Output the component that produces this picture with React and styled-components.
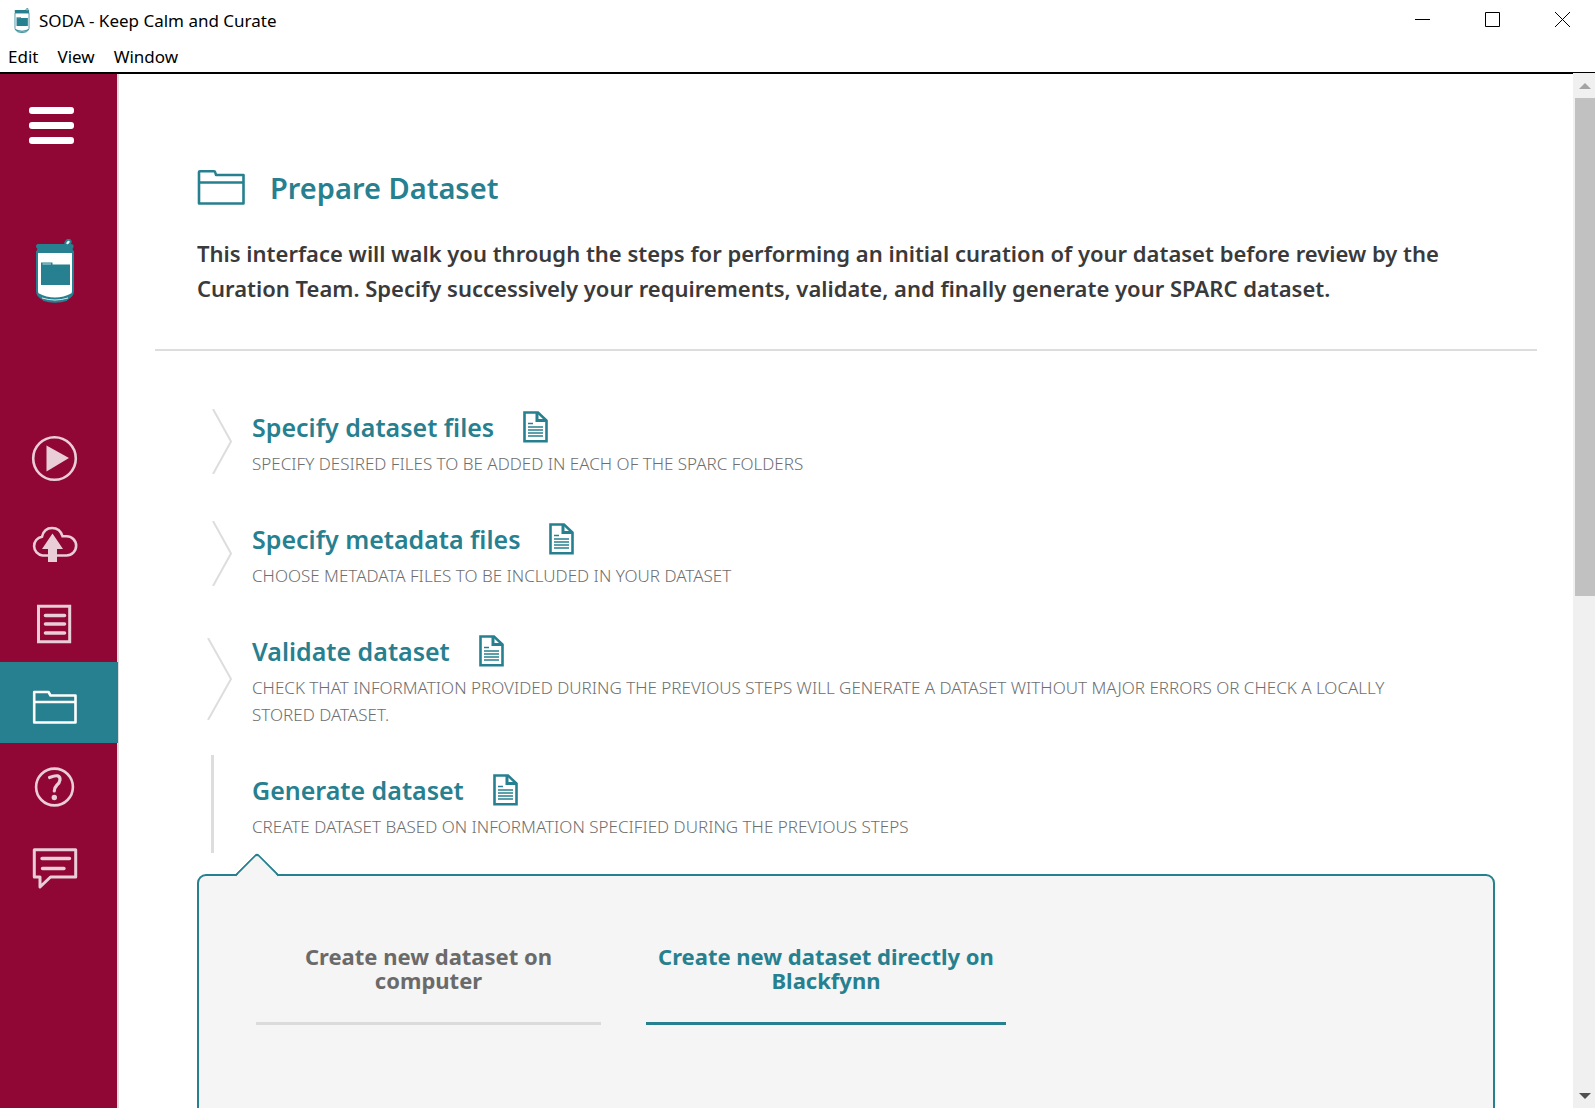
import React from 'react';
import styled, { createGlobalStyle, css } from 'styled-components';

const teal = '#27808f';
const maroon = '#900735';
const grey = '#dddddd';
const panelGrey = '#f5f5f5';

const GlobalStyle = createGlobalStyle`
  *, *::before, *::after { box-sizing: border-box; }
  body { margin: 0; background: #fff; font-family: "Noto Sans", "Open Sans", sans-serif; }
  h1, h2, p { margin: 0; }
  button { margin: 0; padding: 0; border: 0; background: none; font: inherit; color: inherit; cursor: pointer; }
  svg { display: block; }
`;

const Window = styled.div`
  display: flex;
  flex-direction: column;
  height: 100vh;
  overflow: hidden;
`;

const TitleBar = styled.header`
  display: flex;
  align-items: center;
  height: 41px;
  padding: 0 10px 0 14px;
  font-size: 17px;
  line-height: 24px;
  color: #000;
`;

const WindowTitle = styled.span`
  flex: 1;
  margin-left: 9px;
`;

const WindowControls = styled.div`
  display: flex;
  align-self: flex-start;
  gap: 24px;
`;

const WindowButton = styled.button`
  display: grid;
  place-items: center;
  width: 46px;
  height: 39px;
`;

const MenuBar = styled.nav`
  display: flex;
  gap: 19px;
  height: 33px;
  padding: 4px 8px 0;
  border-bottom: 2px solid #000;
  font-size: 17px;
  line-height: 24px;
`;

const MenuItem = styled.button`
  height: 24px;
`;

const Body = styled.div`
  display: flex;
  flex: 1;
  min-height: 0;
`;

const Sidebar = styled.aside`
  flex: none;
  width: 119px;
  border-right: 2px solid ${grey};
  background: ${maroon};
`;

const MenuToggle = styled.button`
  display: flex;
  flex-direction: column;
  gap: 8px;
  margin: 33px 0 0 29px;
`;

const ToggleBar = styled.span`
  width: 45px;
  height: 7px;
  border-radius: 3px;
  background: #fff;
`;

const LogoBox = styled.div`
  margin: 95px 0 116px 35px;
`;

const SideNav = styled.nav`
  display: flex;
  flex-direction: column;
`;

const SideLink = styled.a`
  height: 81px;
  padding: 16px 0 0 31px;
  color: #e9cdd7;
  ${(p) => p.$active && css`
    margin-right: -1px;
    background: ${teal};
    color: #fff;
  `}
`;

const Main = styled.main`
  flex: 1;
  min-width: 0;
  padding: 0 36px;
  overflow: hidden;
`;

const Intro = styled.section`
  padding: 95px 42px 43px;
  border-bottom: 2px solid ${grey};
`;

const TitleRow = styled.div`
  display: flex;
  align-items: center;
  gap: 24px;
  height: 38px;
`;

const PageTitle = styled.h1`
  font-size: 29px;
  font-weight: 600;
  line-height: 38px;
  color: ${teal};
`;

const Lead = styled.p`
  margin-top: 29px;
  font-size: 22px;
  font-weight: 600;
  line-height: 35px;
  color: #3a3a3a;
`;

const Steps = styled.section`
  padding: 41px 42px 0;
`;

const Step = styled.article`
  display: grid;
  grid-template-columns: 35px 1fr;
  column-gap: 20px;
  margin-bottom: 14px;
`;

const Marker = styled.div`
  display: flex;
  align-items: center;
  justify-content: flex-end;
`;

const ActiveMarker = styled.div`
  margin-left: 14px;
  width: 3px;
  background: ${grey};
`;

const StepText = styled.div`
  padding: 17px 60px 13px 0;
`;

const StepHead = styled.button`
  display: flex;
  align-items: center;
  gap: 29px;
  color: ${teal};
`;

const StepTitle = styled.h2`
  font-size: 25px;
  font-weight: 600;
  line-height: 36px;
`;

const StepNote = styled.p`
  margin-top: 5px;
  font-size: 17px;
  font-weight: 300;
  line-height: 27px;
  color: #6e6e6e;
  text-transform: uppercase;
`;

const Panel = styled.section`
  position: relative;
  margin: 21px 42px 0;
  padding: 68px 57px 120px;
  border: 2px solid ${teal};
  border-radius: 9px;
  background: ${panelGrey};
  &::before {
    content: "";
    position: absolute;
    top: -17px;
    left: 42px;
    width: 32px;
    height: 32px;
    border: solid ${teal};
    border-width: 2px 0 0 2px;
    border-radius: 4px 0 0 0;
    background: linear-gradient(135deg, ${panelGrey} 50%, transparent 50%);
    transform: rotate(45deg);
  }
`;

const Tabs = styled.div`
  display: grid;
  grid-template-columns: minmax(0, 345px) minmax(0, 360px);
  gap: 45px;
`;

const Tab = styled.button`
  padding: 0 8px 30px;
  border-bottom: 3px solid ${(p) => (p.$selected ? teal : '#dbdbdb')};
  font-size: 22px;
  font-weight: 700;
  line-height: 24px;
  text-align: center;
  color: ${(p) => (p.$selected ? teal : '#6a6a6a')};
`;

const ScrollTrack = styled.div`
  display: flex;
  flex-direction: column;
  flex: none;
  width: 22px;
  margin-top: -1px;
  padding-left: 2px;
  background: #f0f0f0;
`;

const ScrollButton = styled.button`
  display: grid;
  place-items: center;
  height: 25px;
`;

const ScrollRail = styled.div`
  flex: 1;
`;

const ScrollThumb = styled.div`
  height: 50.6%;
  background: #c1c1c1;
`;

function Can({ width, height }) {
  return (
    <svg width={width} height={height} viewBox="0 0 40 64" aria-hidden="true">
      <path d="M2 13V52Q2 57 8 60Q20 64.500 32 60Q38 57 38 52V13Z" fill="#fff" stroke={teal} strokeWidth="2" />
      <path d="M3 54Q20 63 37 54L36 57Q20 66 4 57Z" fill={teal} />
      <path d="M7 59Q20 63 33 59" fill="none" stroke="#fff" strokeWidth="0.800" />
      <path d="M8 61Q20 65 32 61" fill="none" stroke={teal} strokeWidth="1.600" />
      <path d="M3 5H36Q39 5 38.500 8L37.500 10L39 13H1L2.500 10L1 8Q1 5 3 5Z" fill={teal} />
      <ellipse cx="33" cy="3.500" rx="3" ry="2.200" transform="rotate(-50 33 3.500)" fill="#fff" stroke={teal} strokeWidth="2" />
      <path d="M6 23.500H17.500V25.500H35V46H6Z" fill={teal} />
      <path d="M7.500 25H16" stroke="#fff" strokeWidth="0.700" />
    </svg>
  );
}

function SideIcon({ children }) {
  return (
    <svg width="48" height="56" viewBox="0 0 48 56" fill="none" stroke="currentColor" strokeWidth="2.600" aria-hidden="true">
      {children}
    </svg>
  );
}

const icons = {
  play: (
    <SideIcon>
      <circle cx="23.500" cy="23.500" r="21.300" />
      <path d="M15.500 10.500L38 23L15.500 36.500Z" fill="currentColor" stroke="none" />
    </SideIcon>
  ),
  upload: (
    <SideIcon>
      <path d="M17 39.500H11.500A9.500 9.500 0 0 1 11 20.700Q13 12 21 12Q29 12 31.500 20.200H35.500A9.600 9.600 0 0 1 35.500 39.500H26" />
      <path d="M21.500 17.500L32 33H26V46H17V33H11Z" fill="currentColor" stroke="none" />
    </SideIcon>
  ),
  document: (
    <SideIcon>
      <path d="M7.500 9.300H38.700V44.700H7.500Z" strokeWidth="3" />
      <path d="M14.500 18.500H33.500M14.500 27H33.500M14.500 36H33.500" strokeWidth="3.600" strokeLinecap="round" />
    </SideIcon>
  ),
  folder: (
    <SideIcon>
      <path d="M3.200 44.500V14H17.500L19.500 17.500H44.500V44.500ZM3.200 24H44.500" strokeLinejoin="round" />
    </SideIcon>
  ),
  help: (
    <SideIcon>
      <circle cx="23.500" cy="28" r="18.400" />
      <path d="M18.500 18.500Q29.500 14 29 21Q28.500 24 26 26Q23.500 28.500 23.300 32" strokeWidth="3.200" strokeLinecap="round" />
      <circle cx="23.300" cy="38.500" r="2.700" fill="currentColor" stroke="none" />
    </SideIcon>
  ),
  chat: (
    <SideIcon>
      <path d="M3.300 9.800H44.700V37H19.500L9 47V37H3.300Z" strokeWidth="3" strokeLinejoin="round" />
      <path d="M11 18.500H38.500M11.500 28.500H33" strokeWidth="3.400" strokeLinecap="round" />
    </SideIcon>
  ),
};

function DocIcon() {
  return (
    <svg width="25" height="32" viewBox="0 0 25 32" fill="none" stroke={teal} strokeWidth="2.600" aria-hidden="true">
      <path d="M1.500 1.500H15L23.500 9.500V30.300H1.500Z" />
      <path d="M14 1.500V9.500H23.500" strokeWidth="3" />
      <path d="M5 12.500H10M5 16H20M5 19H20M5 22H20M5 25H20" strokeWidth="1.700" />
    </svg>
  );
}

function Chevron({ tall }) {
  const height = tall ? 82 : 65;
  const width = tall ? 25 : 20;
  return (
    <svg width={width} height={height} viewBox={`0 0 ${width} ${height}`} fill="none" stroke={grey} strokeWidth="2" aria-hidden="true">
      <path d={`M1 0L${width - 1} ${height / 2}L1 ${height}`} />
    </svg>
  );
}

const nav = [
  ['play', 'Getting started'],
  ['upload', 'Manage datasets'],
  ['document', 'Prepare metadata'],
  ['folder', 'Prepare dataset'],
  ['help', 'Help'],
  ['chat', 'Feedback'],
];

const steps = [
  { title: 'Specify dataset files', note: 'Specify desired files to be added in each of the SPARC folders' },
  { title: 'Specify metadata files', note: 'Choose metadata files to be included in your dataset' },
  {
    title: 'Validate dataset',
    note: 'Check that information provided during the previous steps will generate a dataset without major errors or check a locally stored dataset.',
    tall: true,
  },
  { title: 'Generate dataset', note: 'Create dataset based on information specified during the previous steps', open: true },
];

export default function App() {
  return (
    <Window>
      <GlobalStyle />
      <TitleBar>
        <Can width={16} height={25} />
        <WindowTitle>SODA - Keep Calm and Curate</WindowTitle>
        <WindowControls>
          <WindowButton aria-label="Minimize">
            <svg width="15" height="15" viewBox="0 0 15 15" stroke="#000"><path d="M0 7.500H15" /></svg>
          </WindowButton>
          <WindowButton aria-label="Maximize">
            <svg width="15" height="15" viewBox="0 0 15 15" stroke="#000" fill="none"><path d="M.5.5H14.500V14.500H.5Z" /></svg>
          </WindowButton>
          <WindowButton aria-label="Close">
            <svg width="15" height="15" viewBox="0 0 15 15" stroke="#000"><path d="M0 0L15 15M15 0L0 15" /></svg>
          </WindowButton>
        </WindowControls>
      </TitleBar>
      <MenuBar>
        <MenuItem>Edit</MenuItem>
        <MenuItem>View</MenuItem>
        <MenuItem>Window</MenuItem>
      </MenuBar>
      <Body>
        <Sidebar>
          <MenuToggle aria-label="Toggle menu">
            <ToggleBar />
            <ToggleBar />
            <ToggleBar />
          </MenuToggle>
          <LogoBox>
            <Can width={40} height={64} />
          </LogoBox>
          <SideNav>
            {nav.map(([icon, label]) => (
              <SideLink key={icon} href={`#${icon}`} aria-label={label} $active={icon === 'folder'}>
                {icons[icon]}
              </SideLink>
            ))}
          </SideNav>
        </Sidebar>
        <Main>
          <Intro>
            <TitleRow>
              <svg width="49" height="36" viewBox="0 0 49 36" fill="none" stroke={teal} strokeWidth="2.600" strokeLinejoin="round" aria-hidden="true">
                <path d="M2 33.500V2Q2 1.300 3 1.300H17Q18 1.300 18.300 2.500L19 5H46.500V33.500ZM2 12.500H46.500" />
              </svg>
              <PageTitle>Prepare Dataset</PageTitle>
            </TitleRow>
            <Lead>
              This interface will walk you through the steps for performing an initial curation of your dataset before
              review by the Curation Team. Specify successively your requirements, validate, and finally generate your
              SPARC dataset.
            </Lead>
          </Intro>
          <Steps>
            {steps.map((step) => (
              <Step key={step.title}>
                {step.open ? <ActiveMarker /> : <Marker><Chevron tall={step.tall} /></Marker>}
                <StepText>
                  <StepHead>
                    <StepTitle>{step.title}</StepTitle>
                    <DocIcon />
                  </StepHead>
                  <StepNote>{step.note}</StepNote>
                </StepText>
              </Step>
            ))}
          </Steps>
          <Panel>
            <Tabs role="tablist">
              <Tab role="tab">Create new dataset on computer</Tab>
              <Tab role="tab" aria-selected="true" $selected>Create new dataset directly on Blackfynn</Tab>
            </Tabs>
          </Panel>
        </Main>
        <ScrollTrack>
          <ScrollButton aria-label="Scroll up">
            <svg width="12" height="6" viewBox="0 0 12 6"><path d="M0 6L6 0L12 6Z" fill="#a3a3a3" /></svg>
          </ScrollButton>
          <ScrollRail>
            <ScrollThumb />
          </ScrollRail>
          <ScrollButton aria-label="Scroll down">
            <svg width="12" height="6" viewBox="0 0 12 6"><path d="M0 0L6 6L12 0Z" fill="#505050" /></svg>
          </ScrollButton>
        </ScrollTrack>
      </Body>
    </Window>
  );
}
